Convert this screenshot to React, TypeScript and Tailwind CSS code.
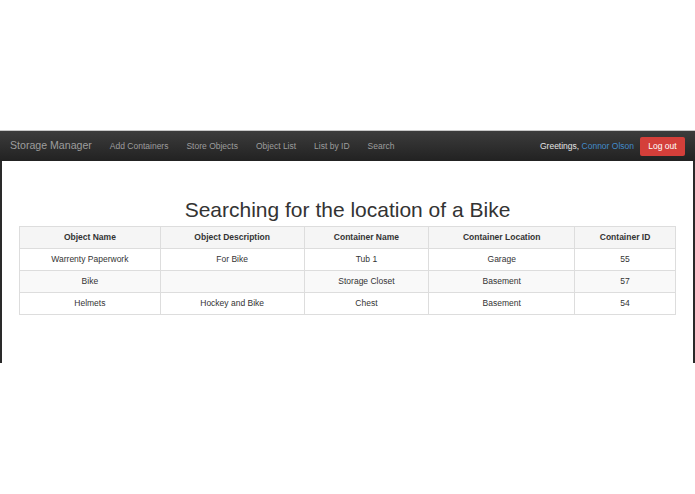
import React from "react";

const rows = [
  { name: "Warrenty Paperwork", desc: "For Bike", container: "Tub 1", location: "Garage", id: "55" },
  { name: "Bike", desc: "", container: "Storage Closet", location: "Basement", id: "57" },
  { name: "Helmets", desc: "Hockey and Bike", container: "Chest", location: "Basement", id: "54" },
];

const cols = ["w-[141px]", "w-[144px]", "w-[125px]", "w-[146px]", "w-[101px]"];

export default function App() {
  return (
    <div
      className="w-[695px] h-[494px] bg-white overflow-hidden"
      style={{ fontFamily: '"Liberation Sans", Arial, sans-serif' }}
    >
      <div className="h-[130px]" />

      {/* navbar */}
      <div className="h-[31px] border-t border-[#c8c8c8] bg-gradient-to-b from-[#3c3c3c] to-[#222222] flex items-center">
        <span className="ml-[10px] text-[10.6px] text-[#9d9d9d]">Storage Manager</span>
        <nav className="flex items-center text-[8.5px] text-[#9d9d9d]">
          <span className="ml-[18px]">Add Containers</span>
          <span className="ml-[18px]">Store Objects</span>
          <span className="ml-[18px]">Object List</span>
          <span className="ml-[18px]">List by ID</span>
          <span className="ml-[18px]">Search</span>
        </nav>
        <div className="ml-auto flex items-center">
          <span className="text-[8.5px] text-[#e5e5e5]">
            Greetings, <span className="text-[#428bca]">Connor Olson</span>
          </span>
          <button className="ml-[6px] mr-[10px] h-[19px] w-[45px] rounded-[2px] bg-[#d43f3a] text-white text-[8.5px] flex items-center justify-center">
            Log out
          </button>
        </div>
      </div>

      {/* content */}
      <div className="h-[202px] border-l-2 border-r-2 border-[#2a2a2a]">
        <h1 className="pt-[32px] text-center text-[21px] leading-[33px] text-[#333]">
          Searching for the location of a Bike
        </h1>
        <table className="ml-[17px] w-[657px] border-collapse text-[8.5px] text-[#333] text-center">
          <thead>
            <tr className="h-[22px] bg-[#f5f5f5]">
              {["Object Name", "Object Description", "Container Name", "Container Location", "Container ID"].map((h, i) => (
                <th key={h} className={`${cols[i]} border border-[#dddddd] font-bold`}>
                  {h}
                </th>
              ))}
            </tr>
          </thead>
          <tbody>
            {rows.map((r, i) => (
              <tr key={r.name} className={i % 2 === 1 ? "h-[22px] bg-[#f9f9f9]" : "h-[22px] bg-white"}>
                <td className="border border-[#dddddd]">{r.name}</td>
                <td className="border border-[#dddddd]">{r.desc}</td>
                <td className="border border-[#dddddd]">{r.container}</td>
                <td className="border border-[#dddddd]">{r.location}</td>
                <td className="border border-[#dddddd]">{r.id}</td>
              </tr>
            ))}
          </tbody>
        </table>
      </div>
    </div>
  );
}
